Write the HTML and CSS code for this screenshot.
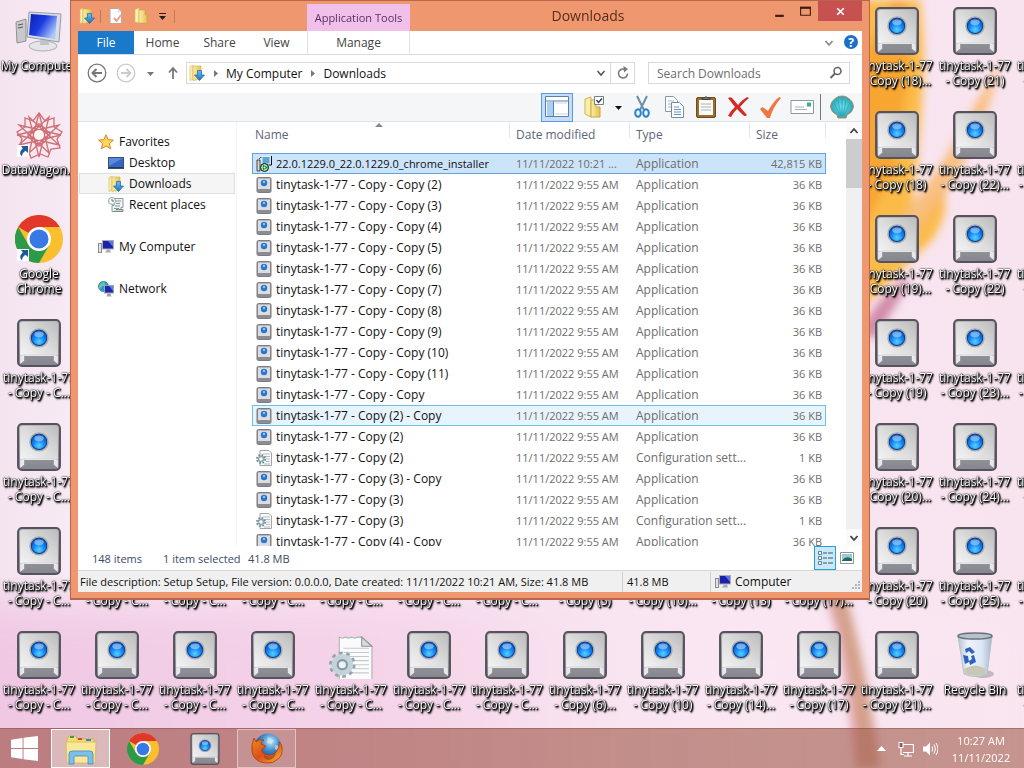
FILE: index.html
```
<!DOCTYPE html>
<html lang="en">
<head>
    <meta charset="UTF-8">
    <meta name="viewport" content="width=device-width, initial-scale=1.0">
    <title>Downloads</title>
    <link rel="stylesheet" href="styles.css">
</head>
<body>
    <!-- icon symbols -->
    <svg class="sprites" aria-hidden="true">
        <defs>
            <linearGradient id="gKey" x1="0" y1="1" x2="1" y2="0">
                <stop offset="0" stop-color="#f4f4f4"/><stop offset=".5" stop-color="#dcdcdc"/><stop offset="1" stop-color="#bdbdbd"/>
            </linearGradient>
            <linearGradient id="gKeySide" x1="0" y1="0" x2="0" y2="1">
                <stop offset="0" stop-color="#b8b8bc"/><stop offset="1" stop-color="#85858d"/>
            </linearGradient>
            <radialGradient id="gBall" cx=".5" cy=".75" r=".75">
                <stop offset="0" stop-color="#5fd0ff"/><stop offset=".5" stop-color="#1288f4"/><stop offset="1" stop-color="#0548b4"/>
            </radialGradient>
            <linearGradient id="gFolder" x1="0" y1="0" x2="1" y2="0">
                <stop offset="0" stop-color="#fbeeaa"/><stop offset="1" stop-color="#e3c350"/>
            </linearGradient>
            <linearGradient id="gArrow" x1="0" y1="0" x2="0" y2="1">
                <stop offset="0" stop-color="#6cc0f0"/><stop offset="1" stop-color="#1772c0"/>
            </linearGradient>
            <linearGradient id="gScreen" x1="0" y1="0" x2="1" y2=".6">
                <stop offset="0" stop-color="#0a1fae"/><stop offset=".5" stop-color="#1c3be0"/><stop offset="1" stop-color="#a9c8fb"/>
            </linearGradient>
            <linearGradient id="gBin" x1="0" y1="0" x2="1" y2="0">
                <stop offset="0" stop-color="#b9c3d2"/><stop offset=".3" stop-color="#eef3fa"/><stop offset=".7" stop-color="#dde7f4"/><stop offset="1" stop-color="#a9b6c8"/>
            </linearGradient>
            <radialGradient id="gGlobe" cx=".6" cy=".3" r=".7">
                <stop offset="0" stop-color="#bfe6f8"/><stop offset=".5" stop-color="#3b87c8"/><stop offset="1" stop-color="#163a80"/>
            </radialGradient>
            <linearGradient id="gFox" x1="0" y1="0" x2="1" y2="1">
                <stop offset="0" stop-color="#f08a24"/><stop offset=".5" stop-color="#dd4f15"/><stop offset="1" stop-color="#f8b83a"/>
            </linearGradient>
            <radialGradient id="gShell" cx=".5" cy=".5" r=".6">
                <stop offset="0" stop-color="#6fe6ee"/><stop offset="1" stop-color="#1996ac"/>
            </radialGradient>
        </defs>

        <symbol id="key" viewBox="0 0 43 47">
            <rect x="1" y="1" width="41" height="45" rx="4" fill="url(#gKeySide)" stroke="#55535e" stroke-width="2"/>
            <path d="M3 36V5q0-2 2-2h33q2 0 2 2v31q-3-1-4-1H7q-2 0-4 1z" fill="url(#gKey)"/>
            <path d="M3 44v-8l4-1v6zM40 44v-8l-4-1v6z" fill="#e8e8ec"/>
            <path d="M7 35.500h29" stroke="#fff"/>
            <circle cx="21.500" cy="18.500" r="9.500" fill="#a5a9ae"/>
            <circle cx="21.500" cy="18.500" r="7.500" fill="url(#gBall)" stroke="#0a3f98"/>
            <ellipse cx="21.500" cy="15" rx="4.500" ry="2.800" fill="#b5dcff" opacity=".6"/>
        </symbol>

        <symbol id="keySmall" viewBox="0 0 16 16">
            <rect x="1" y=".5" width="14" height="15" rx="1.500" fill="#8c8c92" stroke="#7c7c82"/>
            <path d="M2 1.500h12V12H2z" fill="#dddde0"/>
            <circle cx="8" cy="6" r="3.200" fill="#2a76cf"/>
            <circle cx="8" cy="5" r="1.200" fill="#8ec8f6"/>
        </symbol>

        <symbol id="ini" viewBox="0 0 43 47">
            <path d="M10 6l3 1 3-1 3 1 3-1 3 1 3-1 4 0 10 9v33H10z" fill="#fbfbfb" stroke="#a9adb0"/>
            <path d="M32 6v9h10z" fill="#d8dcde" stroke="#8c9194"/>
            <path d="M14 17h25M14 21h25M14 25h25M14 29h25M14 33h25M14 37h25M14 41h25" stroke="#c3cace"/>
            <circle cx="13" cy="33" r="11" fill="none" stroke="#94a4ae" stroke-width="4" stroke-dasharray="3.450 3.450"/>
            <circle cx="13" cy="33" r="7.500" fill="none" stroke="#c4d2da" stroke-width="6"/>
            <circle cx="13" cy="33" r="4.500" fill="#eef3f5" stroke="#8497a4" stroke-width="2"/>
        </symbol>

        <symbol id="iniSmall" viewBox="0 0 16 16">
            <path d="M4 .5h9l2.500 2.500v12.500H4z" fill="#fbfbfb" stroke="#9fa5a8"/>
            <path d="M7 4h7M7 6.500h7M10 9h4M10 11.500h4M8 14h6" stroke="#b5bdc1"/>
            <circle cx="5" cy="9" r="4" fill="none" stroke="#6f8b98" stroke-width="2" stroke-dasharray="1.600 1.550"/>
            <circle cx="5" cy="9" r="2.500" fill="#fff" stroke="#8ca6b2" stroke-width="1.500"/>
        </symbol>

        <symbol id="setup" viewBox="0 0 16 16">
            <path d="M1 4h3v11H1zM3 3l2-2 1 1" fill="#d8d8d8" stroke="#222" stroke-width=".8"/>
            <path d="M5 8h8v3H5z" fill="#cfd3d6"/>
            <rect x="6" y=".5" width="8" height="7.500" fill="#5aa6d8" stroke="#e4ebef"/>
            <path d="M15.500 0v9h-3" fill="none" stroke="#111"/>
            <circle cx="8.500" cy="11.500" r="4" fill="#9be3a4" stroke="#111"/>
            <path d="M7 9l5 2.500-5 2.500z" fill="#0b7a2c"/>
            <circle cx="8.500" cy="11.500" r="1" fill="#fff"/>
        </symbol>

        <symbol id="downloads" viewBox="0 0 16 16">
            <path d="M1 1.500L4 0v14.500L1 15.500z" fill="#f9edb2" stroke="#d9bb55" stroke-width=".6"/>
            <path d="M4 1h8v13l-8 1.500z" fill="url(#gFolder)" stroke="#cfae46" stroke-width=".6"/>
            <path d="M8.500 5.500h4v4.500H15.500L10.500 15.500 5.500 10h3z" fill="url(#gArrow)" stroke="#1a659f" stroke-width=".7"/>
        </symbol>

        <symbol id="folder" viewBox="0 0 16 16">
            <path d="M2 1.500L6 0v15l-4-1z" fill="#fbf0b8" stroke="#d8b94f" stroke-width=".6"/>
            <path d="M6 2h6v5h2v8H6z" fill="url(#gFolder)" stroke="#c9a53e" stroke-width=".6"/>
        </symbol>

        <symbol id="props" viewBox="0 0 16 16">
            <path d="M2 .5h8l3.500 3.500v11.500H2z" fill="#fdfdfd" stroke="#b7a9a0"/>
            <path d="M10 .5V4h3.500z" fill="#ddd"/>
            <path d="M6 10l2.500 3 4.500-6" fill="none" stroke="#e8a488" stroke-width="2"/>
        </symbol>

        <symbol id="star" viewBox="0 0 16 16">
            <path d="M8 .8l2.100 4.900 5.300.4-4 3.500 1.200 5.200L8 12l-4.600 2.800 1.200-5.200-4-3.500 5.300-.4z" fill="#ffd75a" stroke="#d9822b"/>
        </symbol>

        <symbol id="desktopIcon" viewBox="0 0 16 16">
            <rect x=".5" y="2.500" width="15" height="11" fill="#3767c4" stroke="#35506f"/>
            <path d="M1 3h14L1 11z" fill="#5a8ade"/>
            <path d="M1 12.500h14" stroke="#223a5e"/>
        </symbol>

        <symbol id="recent" viewBox="0 0 16 16">
            <path d="M6 1.500h9v9h-2v4H4v-6h2z" fill="#eef2f2" stroke="#8c9a9c"/>
            <path d="M8 4h5M8 6.500h4M7 9h5M6 11.500h5" stroke="#7e9fa0"/>
            <circle cx="4" cy="4" r="3.500" fill="#f4f7f7" stroke="#97a5a8"/>
            <path d="M4 2v2h2" fill="none" stroke="#5f7c80"/>
            <path d="M5 14.500h10v-2H8" fill="#cbd4d4" stroke="#7d8a8c"/>
        </symbol>

        <symbol id="pc" viewBox="0 0 16 16">
            <rect x=".5" y="4.500" width="3" height="9" fill="#e2e2e2" stroke="#8d8d90"/>
            <rect x="4.500" y="1.500" width="11" height="8.500" fill="#1c22a8" stroke="#a8adb5"/>
            <path d="M10 2h5v6z" fill="#5a74e6"/>
            <path d="M9 10.500h3l1 3H7z" fill="#a9adb3"/>
        </symbol>

        <symbol id="network" viewBox="0 0 16 16">
            <circle cx="5.500" cy="5.500" r="5" fill="#2b9ac8" stroke="#1c6a90" stroke-width=".7"/>
            <path d="M2 3q3-3 5-1 1 2-2 3T2 9Q0 5 2 3z" fill="#68c7a6"/>
            <rect x="6.500" y="4.500" width="9" height="7.500" fill="#1c28ac" stroke="#9aa4b4"/>
            <path d="M11 5h4v5z" fill="#5c7cec"/>
            <path d="M9.500 12.500h3l1 3h-5z" fill="#a0a5ad"/>
        </symbol>

        <symbol id="computer" viewBox="0 0 48 48">
            <path d="M1 15l10-3v22l-9 2z" fill="#c9c9cb" stroke="#909094"/>
            <path d="M3 18l5-1M3 21l5-1" stroke="#555"/>
            <ellipse cx="28" cy="39" rx="14" ry="5" fill="#e4e6ea" stroke="#a9adb4"/>
            <path d="M26 28h7l1 10h-9z" fill="#bfc3ca"/>
            <path d="M14 5l32 2-2 28-32-5z" fill="#d9dde3" stroke="#979ca6"/>
            <path d="M16 7l26 2-2 23-26-4z" fill="url(#gScreen)"/>
        </symbol>

        <symbol id="shortcut" viewBox="0 0 12 12">
            <path d="M0 0h12v12H0z" fill="#fff"/>
            <path d="M4 1h7v7L8.500 5.800Q5 8 5 11.500 1 8 5.800 3.300z" fill="#1d5a9b"/>
        </symbol>

        <symbol id="wagon" viewBox="0 0 48 48">
            <g fill="none" stroke="#cf6f76" stroke-width="1.300">
                <path d="M24 2L34 42 4 14 46 24 4 34 34 6 24 46 14 6 44 34 2 24 44 14 14 42z"/>
                <path d="M24 2l6 8 9-3 0 9 8 5-5 7 3 9-9 1-3 8-8-3-9 4-3-9-9-1 3-9-5-7 8-5V7l8 3z"/>
                <circle cx="24" cy="24" r="9"/>
                <circle cx="24" cy="17" r="4"/><circle cx="31" cy="24" r="4"/><circle cx="24" cy="31" r="4"/><circle cx="17" cy="24" r="4"/>
            </g>
            <circle cx="24" cy="24" r="5" fill="#fff4ee"/>
        </symbol>

        <symbol id="chrome" viewBox="0 0 48 48">
            <circle cx="24" cy="24" r="24" fill="#f9bf2d"/>
            <path d="M24 24L3.200 12A24 24 0 0 1 44.800 12H24z" fill="#e2382c"/>
            <path d="M3.200 12A24 24 0 0 0 24 48L34.400 30 24 24 13.600 30z" fill="#2d9a49"/>
            <circle cx="24" cy="24" r="12" fill="#fff"/>
            <circle cx="24" cy="24" r="9.500" fill="#3b78e7"/>
        </symbol>

        <symbol id="bin" viewBox="0 0 48 48">
            <ellipse cx="32" cy="43" rx="11" ry="4" fill="#8d8790" opacity=".5"/>
            <path d="M7 5h34l-5 38q-12 5-23 0z" fill="url(#gBin)" stroke="#b6c0cc"/>
            <ellipse cx="24" cy="5" rx="17" ry="3" fill="#b8c2cc" stroke="#66737f" stroke-width="1.500"/>
            <path d="M13 38q11-7 22 0l-1 5q-10 4-20 0z" fill="#c8c8b8"/>
            <path d="M14 18l5-2 5 5-3 2-3-3-3 2zM12 24l5 1 1 6-4 2zM23 24l2 7-6 3-1-4 3-2-1-3z" fill="#2f62bd"/>
        </symbol>

        <symbol id="firefox" viewBox="0 0 32 32">
            <circle cx="17" cy="14" r="13.500" fill="url(#gGlobe)"/>
            <path d="M17 4q4 1 6 4l-3 3-4-1zM24 12l4 1-1 5-3-2z" fill="#d8eef8" opacity=".6"/>
            <path d="M3 5l2 4q2-3 8-2-3 1-3 4l5 2q-1 2-4 3-1 4 5 6 6 1 9-3 4-4 3-10 3 2 3 6 1 7-4 11-5 5-12 4Q3 29 1 19 0 11 3 5z" fill="url(#gFox)" stroke="#a8380c" stroke-width=".8"/>
            <path d="M13 22q6 4 12-2-2 7-8 7-5-1-4-5z" fill="#8c2c08" opacity=".5"/>
        </symbol>

        <symbol id="explorer" viewBox="0 0 32 32">
            <path d="M2 6l2-3h7l1 3h17v7H2z" fill="#f3dc7c" stroke="#cba93e" stroke-width=".7"/>
            <path d="M5 3h4v2H5z" fill="#3f9d46"/><path d="M13 5h4v2h-4z" fill="#d34a36"/><path d="M21 6h5v2h-5z" fill="#3f83c8"/>
            <path d="M1 9h30l-1 21H2z" fill="#f8e898" stroke="#d5b64c" stroke-width=".7"/>
            <path d="M4 31V21q0-3 3-3h18q3 0 3 3v10h-5v-7q0-1-1-1H10q-1 0-1 1v7z" fill="#7cc0ea" stroke="#4488bb" stroke-width=".8"/>
        </symbol>
    </svg>

    <!-- wallpaper -->
    <svg class="wallpaper" viewBox="0 0 1024 768" preserveAspectRatio="none" aria-hidden="true">
        <defs>
            <linearGradient id="wBase" x1="0" y1="0" x2="1" y2="0">
                <stop offset="0" stop-color="#f4e4f0"/><stop offset=".07" stop-color="#f7eaf4"/><stop offset=".6" stop-color="#fae6f2"/><stop offset="1" stop-color="#f8e4ef"/>
            </linearGradient>
            <linearGradient id="wLow" x1="0" y1="0" x2="1" y2="0">
                <stop offset="0" stop-color="#f0c6e3"/><stop offset=".45" stop-color="#f5d6ea"/><stop offset=".7" stop-color="#fae8f3" stop-opacity=".4"/>
            </linearGradient>
            <filter id="soft"><feGaussianBlur stdDeviation="4"/></filter>
            <filter id="wide"><feGaussianBlur stdDeviation="25"/></filter>
        </defs>
        <rect width="1024" height="768" fill="url(#wBase)"/>
        <rect x="-60" y="600" width="1100" height="220" fill="url(#wLow)" filter="url(#wide)"/>
        <g filter="url(#soft)">
            <path d="M860 0h60q6 50 2 100-4 70-14 130l34-40q10 20-10 50-20 20-72 70z" fill="#fbbb4a"/>
            <path d="M862 60l30-60 14 0 4 60-14 110-34 60z" fill="#f8a630"/>
            <path d="M1000 60q-8 50-40 110-26 50-66 90l4-40q44-50 68-100 24-40 34-60z" fill="#f8b970" opacity=".85"/>
            <path d="M860 330q20-34 45-52l4 6q-16 24-34 56z" fill="#d08aa8"/>
            <path d="M826 590h18q22 70 36 178h-26q-6-90-28-178z" fill="#d4a08c"/>
            <path d="M824 590q26 70 32 178" fill="none" stroke="#f3b6cf" stroke-width="3"/>
        </g>
    </svg>

    <main class="desktop" id="desktop"></main>

    <section class="window" aria-label="Downloads">
        <header class="titlebar">
            <div class="quick">
                <svg class="i16"><use href="#downloads"/></svg>
                <span class="quick-sep"></span>
                <button class="plain" aria-label="Properties"><svg class="i16"><use href="#props"/></svg></button>
                <button class="plain" aria-label="New folder"><svg class="i16"><use href="#folder"/></svg></button>
                <button class="plain" aria-label="Customize Quick Access Toolbar">
                    <svg class="i9" viewBox="0 0 9 9"><path d="M1 1.500h7" stroke="#222"/><path d="M1 4h7L4.500 8z" fill="#222"/></svg>
                </button>
                <span class="quick-sep"></span>
            </div>
            <div class="context-tab">Application Tools</div>
            <h1 class="title">Downloads</h1>
            <div class="controls">
                <button class="ctl" aria-label="Minimize"><svg viewBox="0 0 12 12"><path d="M2 10h8" stroke="#3a1c10" stroke-width="2"/></svg></button>
                <button class="ctl" aria-label="Maximize"><svg viewBox="0 0 12 12"><path d="M1.500 2.500h9v7h-9z" fill="none" stroke="#3a1c10"/><path d="M1 2.500h10" stroke="#3a1c10" stroke-width="2"/></svg></button>
                <button class="ctl close" aria-label="Close"><svg viewBox="0 0 12 12"><path d="M3 3l6 6M9 3l-6 6" stroke="#fff" stroke-width="1.600"/></svg></button>
            </div>
        </header>

        <nav class="ribbon">
            <button class="tab file">File</button>
            <button class="tab">Home</button>
            <button class="tab">Share</button>
            <button class="tab">View</button>
            <button class="tab manage">Manage</button>
            <span class="grow"></span>
            <button class="plain" aria-label="Expand the Ribbon"><svg class="i10" viewBox="0 0 10 10"><path d="M1.500 3L5 7l3.500-4" fill="none" stroke="#8a8a8a" stroke-width="1.800"/></svg></button>
            <button class="help" aria-label="Help">?</button>
        </nav>

        <div class="address-row">
            <button class="plain" aria-label="Back"><svg class="i20" viewBox="0 0 20 20"><circle cx="10" cy="10" r="8.800" fill="none" stroke="#777" stroke-width="1.300"/><path d="M15 10H6M9.500 6L5.500 10l4 4" fill="none" stroke="#777" stroke-width="2"/></svg></button>
            <button class="plain fwd" aria-label="Forward"><svg class="i20" viewBox="0 0 20 20"><circle cx="10" cy="10" r="8.800" fill="none" stroke="#ccc" stroke-width="1.300"/><path d="M5 10h9M10.500 6l4 4-4 4" fill="none" stroke="#ccc" stroke-width="2"/></svg></button>
            <button class="plain recent" aria-label="Recent locations"><svg class="i9" viewBox="0 0 9 9"><path d="M1 3h7L4.500 7z" fill="#777"/></svg></button>
            <button class="plain up" aria-label="Up"><svg class="i14" viewBox="0 0 14 14"><path d="M7 13V3M3 6.500L7 2l4 4.500" fill="none" stroke="#777" stroke-width="1.800"/></svg></button>
            <div class="address">
                <svg class="i16"><use href="#downloads"/></svg>
                <svg class="i9" viewBox="0 0 9 9"><path d="M3 1l4 3.500-4 3.500z" fill="#777"/></svg>
                <a href="#computer">My Computer</a>
                <svg class="i9" viewBox="0 0 9 9"><path d="M3 1l4 3.500-4 3.500z" fill="#777"/></svg>
                <a href="#downloads">Downloads</a>
                <span class="grow"></span>
                <button class="plain" aria-label="Previous locations"><svg class="i10" viewBox="0 0 10 10"><path d="M1.500 3L5 7l3.500-4" fill="none" stroke="#555" stroke-width="1.500"/></svg></button>
                <button class="refresh" aria-label="Refresh"><svg class="i14" viewBox="0 0 14 14"><path d="M11.500 7.500A4.500 4.500 0 1 1 8.500 3.200" fill="none" stroke="#777" stroke-width="1.500"/><path d="M7.500 0l4.500 3-4 3.500z" fill="#777"/></svg></button>
            </div>
            <div class="search">
                <input type="text" placeholder="Search Downloads" aria-label="Search Downloads">
                <svg class="i14" viewBox="0 0 14 14"><circle cx="8.500" cy="5" r="3.500" fill="none" stroke="#666" stroke-width="1.600"/><path d="M6 7.500L1.500 12" stroke="#666" stroke-width="2"/></svg>
            </div>
        </div>

        <div class="toolbar">
            <button class="tool pressed" aria-label="Navigation pane"><svg viewBox="0 0 24 24"><path d="M.5 1.500h23v20H.5z" fill="#fff" stroke="#5b7fa8"/><path d="M1 6h22M8.500 6v15" stroke="#5b7fa8"/><path d="M2 7h6v14H2z" fill="#a8d0f6"/><path d="M10 19h13M10 8h12" stroke="#c5d6e8"/></svg></button>
            <button class="tool options" aria-label="Folder options"><svg viewBox="0 0 24 24"><path d="M3 4l6-2v20l-6-3z" fill="#f9edb0" stroke="#d4b24a"/><path d="M9 5h5v7h4v10H9z" fill="url(#gFolder)" stroke="#cba63c"/><path d="M12.500 1.500h9v8h-9z" fill="#fff" stroke="#6f8297"/><path d="M14.500 5l2 2.500 3.500-4" fill="none" stroke="#333" stroke-width="1.300"/></svg></button>
            <button class="tool drop" aria-label="More folder options"><svg viewBox="0 0 9 9"><path d="M1 3h7L4.500 7z" fill="#111"/></svg></button>
            <button class="tool" aria-label="Cut"><svg viewBox="0 0 24 24"><path d="M7 1l7 14M17 1l-7 14" stroke="#6e8da6" stroke-width="2"/><ellipse cx="8" cy="18" rx="2.800" ry="3.800" fill="none" stroke="#2785c8" stroke-width="2"/><ellipse cx="16" cy="18" rx="2.800" ry="3.800" fill="none" stroke="#2785c8" stroke-width="2"/></svg></button>
            <button class="tool" aria-label="Copy"><svg viewBox="0 0 24 24"><path d="M3.500 1.500h8l4 4v11h-12z" fill="#fff" stroke="#8c97a3"/><path d="M6 6h6M6 9h6M6 12h4" stroke="#9fb6cc"/><path d="M9.500 7.500h8l4 4v11h-12z" fill="#fff" stroke="#7f8b98"/><path d="M12 12h5M12 14.500h7M12 17h7M12 19.500h7" stroke="#5f93c8"/></svg></button>
            <button class="tool" aria-label="Paste"><svg viewBox="0 0 24 24"><rect x="2.500" y="2.500" width="19" height="20" rx="1.500" fill="#9a6d33" stroke="#6f4a1c"/><path d="M5 5h14v15H5z" fill="#fbfbf6"/><path d="M7 9h10M7 12h10M7 15h10" stroke="#aab2b8"/><path d="M8 4.500V3h2.500q1.500-3 3 0H16v1.500z" fill="#777" stroke="#444"/></svg></button>
            <button class="tool" aria-label="Delete"><svg viewBox="0 0 24 24"><path d="M2 3q3-2 5 1l5 6q4-5 9-8l2 1q-5 4-9 9l7 8q-2 2-4 0l-6-6q-4 4-6 8l-3-1q2-5 7-9z" fill="#d42a26"/></svg></button>
            <button class="tool" aria-label="Rename"><svg viewBox="0 0 24 24"><path d="M2 14q2-3 4-1l4 3Q15 7 21 2l2 1q-8 9-11 20H9z" fill="#ef7744"/></svg></button>
            <button class="tool" aria-label="Send"><svg viewBox="0 0 24 24"><path d="M1 5.500h22.500v13H1z" fill="#fff" stroke="#9097a0"/><path d="M17 7.500h4v4h-4z" fill="#2fb58d"/><path d="M5 12h9M5 14.500h12" stroke="#a7b2bf"/></svg></button>
            <span class="tool-sep"></span>
            <button class="tool" aria-label="Classic Shell"><svg viewBox="0 0 24 24"><path d="M12 1q4 0 6 2 5 3 5.500 9-.5 5-6.500 8l-1 3H8l-1-3Q1 17 .5 12 1 6 6 3q2-2 6-2z" fill="url(#gShell)" stroke="#b08a5a"/><path d="M12 3v18M8 5l3 16M16 5l-3 16M4 8l6 12M20 8l-6 12" stroke="#2a9fb2" stroke-width=".7"/></svg></button>
        </div>

        <div class="content">
            <aside class="tree">
                <a href="#favorites"><svg class="i16"><use href="#star"/></svg>Favorites</a>
                <a href="#desktop" class="sub"><svg class="i16"><use href="#desktopIcon"/></svg>Desktop</a>
                <a href="#downloads" class="sub current"><svg class="i16"><use href="#downloads"/></svg>Downloads</a>
                <a href="#recent" class="sub"><svg class="i16"><use href="#recent"/></svg>Recent places</a>
                <a href="#computer" class="group"><svg class="i16"><use href="#pc"/></svg>My Computer</a>
                <a href="#network" class="group"><svg class="i16"><use href="#network"/></svg>Network</a>
            </aside>
            <div class="list">
                <table>
                    <thead>
                        <tr>
                            <th class="c-name sorted">Name</th>
                            <th class="c-date">Date modified</th>
                            <th class="c-type">Type</th>
                            <th class="c-size">Size</th>
                        </tr>
                    </thead>
                    <tbody id="files"></tbody>
                </table>
            </div>
            <div class="scrollbar">
                <button class="plain" aria-label="Scroll up"><svg class="i10" viewBox="0 0 10 10"><path d="M1.500 7L5 3l3.500 4" fill="none" stroke="#444" stroke-width="1.800"/></svg></button>
                <div class="thumb"></div>
                <span class="grow"></span>
                <button class="plain" aria-label="Scroll down"><svg class="i10" viewBox="0 0 10 10"><path d="M1.500 3L5 7l3.500-4" fill="none" stroke="#444" stroke-width="1.800"/></svg></button>
            </div>
        </div>

        <div class="details">
            <span class="count">148 items</span>
            <span class="picked">1 item selected</span>
            <span>41.8 MB</span>
            <span class="grow"></span>
            <button class="view on" aria-label="Details view"><svg class="i16" viewBox="0 0 16 16"><path d="M1.500 1.500h3v3h-3zM1.500 6.500h3v3h-3zM1.500 11.500h3v3h-3z" fill="#fff" stroke="#5e7f95"/><path d="M6 3h4M11 3h5M6 8h4M11 8h5M6 13h4M11 13h5" stroke="#3b5568"/></svg></button>
            <button class="view" aria-label="Large icons view"><svg class="i14" viewBox="0 0 14 14"><path d="M.5 1.500h13v11H.5z" fill="#fff" stroke="#8b949a"/><path d="M2 3h10v5H2z" fill="#9cc8dc"/><path d="M2 9q5-5 10-1v2H2z" fill="#1f6a50"/></svg></button>
        </div>

        <footer class="statusbar">
            <span class="info">File description: Setup Setup, File version: 0.0.0.0, Date created: 11/11/2022 10:21 AM, Size: 41.8 MB</span>
            <span class="size">41.8 MB</span>
            <span class="zone"><svg class="i16"><use href="#pc"/></svg>Computer</span>
            <svg class="grip" viewBox="0 0 9 9"><path d="M7 1h2M7 4h2M4 4h2M7 7h2M4 7h2M1 7h2" stroke="#b5b5b5" stroke-width="2"/></svg>
        </footer>
    </section>

    <footer class="taskbar">
        <button class="start" aria-label="Start"><svg viewBox="0 0 28 26"><path d="M0 4l12-2v10.500H0zM13 1.800L28 0v12.500H13zM0 13.500h12V24L0 22zM13 13.500h15V26l-15-1.800z" fill="#fff"/></svg></button>
        <button class="task active" aria-label="File Explorer"><svg><use href="#explorer"/></svg></button>
        <button class="task" aria-label="Google Chrome"><svg><use href="#chrome"/></svg></button>
        <button class="task" aria-label="TinyTask"><svg><use href="#key"/></svg></button>
        <button class="task open" aria-label="Firefox"><svg><use href="#firefox"/></svg></button>
        <span class="grow"></span>
        <div class="tray">
            <button class="plain" aria-label="Show hidden icons"><svg class="i9" viewBox="0 0 9 9"><path d="M0 7h9L4.500 2z" fill="#fff"/></svg></button>
            <svg class="i16 net" viewBox="0 0 16 16"><path d="M5 3.500h10.500v8H5M10 12v2.500M6 15h8M3 6.500v7h3" fill="none" stroke="#fff" stroke-width="1.200"/><rect x="1" y="1.500" width="4" height="5" fill="#8d5f58" stroke="#fff"/></svg>
            <svg class="i16" viewBox="0 0 16 16"><path d="M1 5.500h3L8 1.500v13L4 10.500H1z" fill="#fff"/><path d="M10 5.500q1.500 2.500 0 5M12 3.500q3 4.500 0 9M14 2q4 6 0 12" fill="none" stroke="#fff"/></svg>
        </div>
        <div class="clock"><span>10:27 AM</span><span>11/11/2022</span></div>
    </footer>

    <script>
        // column, row, icon, label
        const icons = [
            [1, 1, 'computer', 'My Computer'],
            [1, 2, 'wagon', 'DataWagon...'],
            [1, 3, 'chrome', 'Google\nChrome'],
            [13, 7, 'bin', 'Recycle Bin'],
        ];

        function addTask(col, row, suffix, icon) {
            icons.push([col, row, icon || 'key', 'tinytask-1-77\n- Copy ' + suffix]);
        }

        [4, 5, 6, 7].forEach(row => addTask(1, row, '- C...'));

        ['- C...', '- C...', '- C...', '- C...', '- C...', '- C...', '(5)', '(10)...', '(13)', '(17)...']
            .forEach((s, i) => addTask(i + 2, 6, s));
        ['- C...', '- C...', '- C...', '- C...', '- C...', '- C...', '(6)...', '(10)', '(14)...', '(17)']
            .forEach((s, i) => addTask(i + 2, 7, s, i === 3 ? 'ini' : 'key'));

        ['(18)...', '(18)', '(19)...', '(19)', '(20)...', '(20)', '(21)...']
            .forEach((s, i) => addTask(12, i + 1, s));
        ['(21)', '(22)...', '(22)', '(23)...', '(24)...', '(25)...']
            .forEach((s, i) => addTask(13, i + 1, s));
        ['(25)', '(26)...', '(26)', '(27)...', '(27)', '(28)...', '(28)']
            .forEach((s, i) => addTask(14, i + 1, s));

        document.getElementById('desktop').innerHTML = icons.map(([col, row, icon, label]) => `
            <div class="shortcut" style="grid-column: ${col}; grid-row: ${row}">
                <svg class="pic ${icon}"><use href="#${icon}"/></svg>
                ${icon === 'wagon' || icon === 'chrome' ? '<svg class="link"><use href="#shortcut"/></svg>' : ''}
                <span>${label}</span>
            </div>`).join('');

        const files = [['22.0.1229.0_22.0.1229.0_chrome_installer', 'app', '42,815 KB', '11/11/2022 10:21 ...']];
        for (let i = 2; i <= 11; i++) {
            files.push([`tinytask-1-77 - Copy - Copy (${i})`, 'app']);
        }
        files.push(
            ['tinytask-1-77 - Copy - Copy', 'app'],
            ['tinytask-1-77 - Copy (2) - Copy', 'app'],
            ['tinytask-1-77 - Copy (2)', 'app'],
            ['tinytask-1-77 - Copy (2)', 'ini'],
            ['tinytask-1-77 - Copy (3) - Copy', 'app'],
            ['tinytask-1-77 - Copy (3)', 'app'],
            ['tinytask-1-77 - Copy (3)', 'ini'],
            ['tinytask-1-77 - Copy (4) - Copy', 'app']
        );

        document.getElementById('files').innerHTML = files.map(([name, kind, size, date], i) => {
            const icon = i === 0 ? 'setup' : kind === 'ini' ? 'iniSmall' : 'keySmall';
            const state = i === 0 ? 'selected' : i === 12 ? 'hover' : '';
            return `<tr class="${state}">
                <td class="c-name"><svg class="i16"><use href="#${icon}"/></svg>${name}</td>
                <td class="c-date">${date || '11/11/2022 9:55 AM'}</td>
                <td class="c-type">${kind === 'ini' ? 'Configuration sett...' : 'Application'}</td>
                <td class="c-size">${size || (kind === 'ini' ? '1 KB' : '36 KB')}</td>
            </tr>`;
        }).join('');
    </script>
</body>
</html>
```
FILE: styles.css
```
* {
    box-sizing: border-box;
}
body {
    margin: 0;
    height: 100vh;
    overflow: hidden;
    display: flex;
    flex-direction: column;
    position: relative;
    font-family: 'Open Sans', 'Noto Sans', sans-serif;
    font-size: 12px;
    line-height: 15px;
    color: #111;
}
button, input {
    font: inherit;
    color: inherit;
}
button {
    border: none;
    background: none;
    padding: 0;
    display: flex;
    align-items: center;
    justify-content: center;
}
a {
    color: inherit;
    text-decoration: none;
}
svg {
    display: block;
    flex: none;
}
.sprites {
    position: absolute;
    width: 0;
    height: 0;
}
.grow {
    flex: 1;
}
.i9 { width: 9px; height: 9px; }
.i10 { width: 10px; height: 10px; }
.i14 { width: 14px; height: 14px; }
.i16 { width: 16px; height: 16px; }
.i20 { width: 20px; height: 20px; }

/* desktop */
.wallpaper {
    position: absolute;
    inset: 0;
    width: 100%;
    height: 100%;
    z-index: -1;
}
.desktop {
    flex: 1;
    min-height: 0;
    overflow: hidden;
    display: grid;
    grid-template-columns: repeat(14, 78px);
    grid-template-rows: repeat(7, 104px);
}
.shortcut {
    position: relative;
    padding-top: 7px;
    display: flex;
    flex-direction: column;
    align-items: center;
    gap: 3px;
    color: #fff;
    text-align: center;
    white-space: pre;
    text-shadow: 1px 1px 1px #000, 0 0 2px #000, 1px 1px 2px #000, 0 0 1px #000, 1px 2px 2px #000;
}
.pic {
    width: 48px;
    height: 48px;
}
.link {
    position: absolute;
    left: 17px;
    top: 41px;
    width: 12px;
    height: 12px;
}

/* window */
.window {
    position: absolute;
    top: 0;
    left: 70px;
    right: 154px;
    bottom: 168px;
    display: flex;
    flex-direction: column;
    padding: 0 7px 6px;
    background: #ef9870;
    border: 1px solid #b8654a;
    border-bottom-width: 2px;
}
.titlebar {
    height: 30px;
    flex: none;
    display: flex;
}
.quick {
    width: 229px;
    display: flex;
    align-items: center;
    gap: 5px;
    padding-left: 1px;
}
.quick .plain {
    margin: 0 2px;
}
.quick-sep {
    width: 1px;
    height: 13px;
    background: #c27a5c;
}
.context-tab {
    width: 103px;
    margin-top: 3px;
    background: #f0c0ea;
    color: #5a3060;
    display: flex;
    align-items: center;
    justify-content: center;
    font-size: 11px;
    white-space: nowrap;
}
.title {
    flex: 1;
    margin: 0;
    font-size: 14px;
    font-weight: normal;
    line-height: 30px;
    text-align: center;
    color: #5a2c1c;
}
.controls {
    display: flex;
    align-items: flex-start;
}
.ctl {
    width: 26px;
    height: 20px;
}
.ctl svg {
    width: 13px;
    height: 13px;
}
.close {
    width: 44px;
    background: #c75050;
}
.ribbon {
    height: 24px;
    flex: none;
    display: flex;
    align-items: flex-start;
    background: #fff;
    border-bottom: 1px solid #dadbdc;
    padding-right: 4px;
    color: #444;
}
.ribbon button {
    height: 23px;
}
.tab {
    width: 57px;
}
.file {
    width: 56px;
    background: #1979ca;
    color: #fff;
}
.manage {
    width: 103px;
    margin-left: 2px;
    border: solid #e6e0e6;
    border-width: 0 1px;
}
.ribbon .help {
    width: 14px;
    height: 14px;
    margin: 4px 0 0 10px;
    border-radius: 50%;
    background: #1b6fc8;
    color: #fff;
    font-weight: bold;
}
.address-row {
    height: 38px;
    flex: none;
    display: flex;
    align-items: center;
    background: #fff;
    padding: 0 12px 2px 9px;
}
.fwd { margin-left: 9px; }
.recent { margin-left: 10px; }
.up { margin: 0 6px 0 11px; }
.address {
    flex: 1;
    height: 22px;
    display: flex;
    align-items: center;
    border: 1px solid #d9d9d9;
    padding-left: 2px;
    white-space: nowrap;
}
.address .i9 {
    margin: 0 6px;
}
.refresh {
    width: 24px;
    height: 20px;
    margin-left: 4px;
    border-left: 1px solid #d9d9d9;
}
.search {
    width: 202px;
    height: 22px;
    margin-left: 13px;
    display: flex;
    align-items: center;
    border: 1px solid #d9d9d9;
    padding: 0 6px 0 8px;
}
.search input {
    flex: 1;
    min-width: 0;
    border: none;
    padding: 0;
    outline: none;
}
.search input::placeholder {
    color: #6d6d6d;
    opacity: 1;
}
.toolbar {
    height: 29px;
    flex: none;
    display: flex;
    align-items: center;
    justify-content: flex-end;
    background: #f4f6f8;
    border-bottom: 1px solid #dde5ec;
    padding-right: 4px;
}
.tool {
    width: 32px;
    height: 29px;
}
.tool svg {
    width: 24px;
    height: 24px;
}
.pressed {
    background: #c4defa;
    border: 1px solid #5c9ae0;
}
.options {
    margin-left: 5px;
}
.drop {
    width: 16px;
}
.drop svg {
    width: 9px;
    height: 9px;
}
.tool-sep {
    width: 1px;
    height: 26px;
    margin: 0 5px 0 2px;
    background: #777;
}

/* folder content */
.content {
    flex: 1;
    min-height: 0;
    display: flex;
    background: #fff;
}
.tree {
    width: 159px;
    padding: 9px 1px 0;
    border-right: 1px solid #f4f6fa;
}
.tree a {
    height: 21px;
    display: flex;
    align-items: center;
    gap: 5px;
    border: 1px solid transparent;
    padding-left: 18px;
}
.tree .sub {
    padding-left: 28px;
}
.tree .current {
    background: #f5f5f5;
    border-color: #dedede;
}
.tree .group {
    margin-top: 21px;
}
.list {
    flex: 1;
    min-width: 0;
    overflow: hidden;
    padding: 0 20px 0 15px;
}
table {
    width: 100%;
    table-layout: fixed;
    border-collapse: collapse;
}
th, td {
    height: 21px;
    padding: 0 6px;
    text-align: left;
    font-weight: normal;
    white-space: nowrap;
    overflow: hidden;
    color: #6d6d6d;
}
th {
    height: 31px;
    padding-bottom: 6px;
    color: #5c6678;
    background: linear-gradient(#e3e8ee, #e3e8ee) right top / 1px 16px no-repeat;
}
.c-date, .c-type {
    width: 120px;
}
.c-size {
    width: 76px;
}
td.c-date {
    font-size: 11px;
}
td.c-size {
    padding-right: 4px;
    font-size: 11px;
    text-align: right;
}
th.c-name {
    padding-left: 3px;
}
td.c-name {
    padding-left: 4px;
    color: #111;
}
td .i16 {
    float: left;
    margin-right: 4px;
}
.sorted {
    position: relative;
}
.sorted::after {
    content: '';
    position: absolute;
    top: 1px;
    left: 50%;
    margin-left: -6px;
    border: 4px solid transparent;
    border-top: none;
    border-bottom: 4px solid #7d8a96;
}
.selected {
    background: #cce4fa;
    outline: 1px solid #66a3dc;
    outline-offset: -1px;
}
.selected .c-name {
    font-size: 11px;
}
.hover {
    background: #e8f4fc;
    outline: 1px solid #70c0e7;
    outline-offset: -1px;
}
.scrollbar {
    width: 16px;
    display: flex;
    flex-direction: column;
    background: #f0f0f0;
}
.scrollbar .plain {
    height: 17px;
    background: #fafafa;
}
.thumb {
    height: 49px;
    background: #cdcdcd;
}
.details {
    height: 24px;
    flex: none;
    display: flex;
    align-items: center;
    background: #fff;
    padding: 0 4px 0 14px;
    font-size: 11px;
    color: #3b4a66;
}
.count { width: 71px; }
.picked { width: 85px; }
.view {
    width: 22px;
    height: 24px;
}
.view.on {
    background: #cbe8f6;
    border: 1px solid #26a0da;
}
.statusbar {
    height: 22px;
    flex: none;
    display: flex;
    align-items: center;
    background: #f0f0f0;
    border-top: 1px solid #d7d7d7;
    white-space: nowrap;
}
.info {
    flex: 1;
    min-width: 0;
    overflow: hidden;
    padding-left: 2px;
    font-size: 11px;
}
.size, .zone {
    border-left: 1px solid #d0d0d0;
    padding-left: 4px;
    height: 20px;
    line-height: 20px;
}
.size {
    width: 88px;
    font-size: 11px;
}
.zone {
    width: 141px;
    display: flex;
    align-items: center;
    gap: 4px;
}
.grip {
    width: 9px;
    height: 9px;
    align-self: flex-end;
    margin: 0 2px 2px 0;
}

/* taskbar */
.taskbar {
    height: 40px;
    flex: none;
    display: flex;
    align-items: stretch;
    background: linear-gradient(90deg, rgba(168, 96, 90, 0.72), rgba(165, 98, 82, 0.62));
    border-top: 1px solid rgba(120, 60, 60, 0.4);
    color: #fff;
}
.start {
    width: 48px;
}
.start svg {
    width: 27px;
    height: 25px;
}
.task {
    width: 59px;
    margin-left: 3px;
    border: 1px solid transparent;
}
.task svg {
    width: 32px;
    height: 32px;
}
.active {
    background: rgba(255, 255, 255, 0.45);
    border-color: #fff;
}
.open {
    background: rgba(255, 255, 255, 0.12);
    border-color: rgba(255, 255, 255, 0.45);
}
.tray {
    display: flex;
    align-items: center;
    gap: 8px;
}
.net {
    margin-left: 4px;
}
.clock {
    width: 86px;
    display: flex;
    flex-direction: column;
    justify-content: center;
    align-items: center;
    font-size: 11px;
    line-height: 17px;
}
```
